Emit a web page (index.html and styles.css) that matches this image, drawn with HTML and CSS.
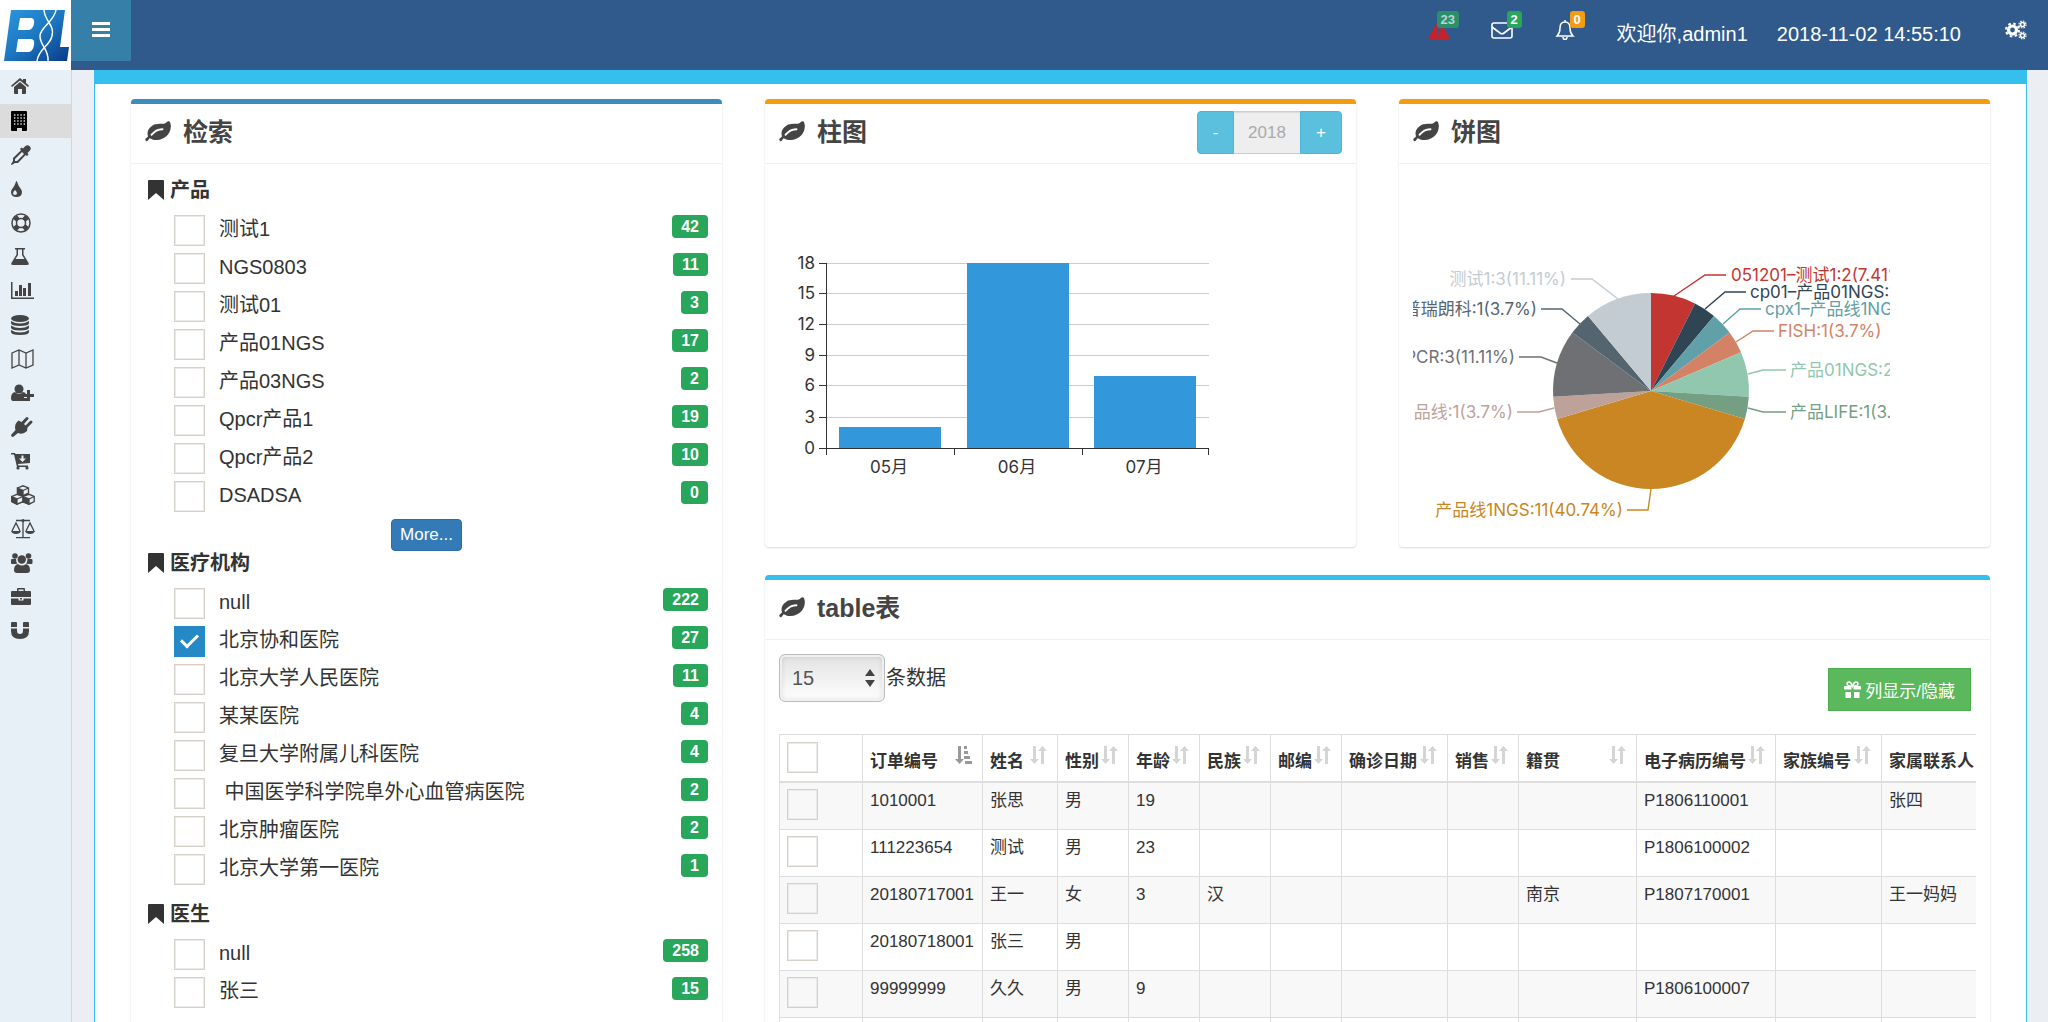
FILE: index.html
```html
<!DOCTYPE html>
<html lang="zh-CN">
<head>
    <meta charset="UTF-8">
    <meta name="viewport" content="width=device-width, initial-scale=1.0">
    <title>检索</title>
    <link rel="stylesheet" href="styles.css">
</head>
<body>
    <!-- shared icons -->
    <svg class="icon-defs" aria-hidden="true">
        <symbol id="i-leaf" viewBox="0 0 1802 1536">
            <path d="M1280 576q0-26-19-45t-45-19q-172 0-318 49.500t-259.500 134-235.500 219.500q-19 21-19 45 0 26 19 45t45 19q24 0 45-19 27-24 74-71t67-66q137-124 268.500-176t313.500-52q26 0 45-19t19-45zm512-198q0 95-20 193-46 224-184.500 383t-357.500 268q-214 108-438 108-148 0-286-47-15-5-88-42t-96-37q-16 0-39.500 32t-45 70-52.500 70-60 32q-43 0-63.500-17.500T26 1346q-2-4-6-11t-5.500-10-3-9.500T10 1302q0-35 31-73.500t68-65.500 68-56 31-48q0-4-14-38t-16-44q-9-51-9-104 0-115 43.500-220t119-184.500 170.500-139 204-95.500q55-18 145-25.500t179.500-9 178.500-6 163.500-24T1485 107l29.500-29.500 29.500-28 27-20 36.500-16T1651 9q39 0 70.500 46t47.500 112 24 124 8 96z"/>
        </symbol>
        <symbol id="i-bookmark" viewBox="0 0 16 20">
            <path d="M1 0h14q1 0 1 1v19l-8-7-8 7V1q0-1 1-1z"/>
        </symbol>
        <symbol id="i-sort" viewBox="0 0 17 18">
            <path d="M3 0h3v13h3l-4.500 5L0 13h3zM11 18h3V5h3l-4.500-5L8 5h3z"/>
        </symbol>
        <symbol id="i-sort-asc" viewBox="0 0 17 18">
            <path d="M3 0h3v13h3l-4.500 5L0 13h3zM9 0h3v3H9zM9 5h4v3H9zM9 10h6v3H9zM10 15h7v3h-7z"/>
        </symbol>
    </svg>

    <header class="header">
        <a class="logo" href="#" aria-label="BXL">
            <svg viewBox="0 0 71 70" width="71" height="70">
                <defs>
                    <linearGradient id="logoFill" x1="0" y1="0" x2="1" y2="1">
                        <stop offset="0" stop-color="#2a97df"/>
                        <stop offset="0.500" stop-color="#1c76c0"/>
                        <stop offset="1" stop-color="#0a3a86"/>
                    </linearGradient>
                </defs>
                <path fill="url(#logoFill)" fill-rule="evenodd" d="M11 10H65L60 47H69L67 61H4ZM20 18L18 30H29Q33 29 34 24Q35 18 31 18ZM18 39L16 52H29Q33 51 34 45Q35 39 31 39Z"/>
                <g fill="none" stroke="#fff" stroke-width="1.500">
                    <path d="M44 10C45 22 55 25 52 36C50 46 39 48 37 61"/>
                    <path d="M56 10C54 22 40 27 40 36C40 46 49 49 48 61"/>
                </g>
            </svg>
        </a>
        <button class="menu-toggle" type="button" aria-label="菜单">
            <svg viewBox="0 0 18 15" width="18" height="15"><path fill="#fff" d="M0 0h18v3H0zM0 6h18v3H0zM0 12h18v3H0z"/></svg>
        </button>
        <nav class="top-nav">
            <a class="notice" href="#">
                <svg class="alert" viewBox="0 0 22 20" width="22" height="20"><path d="M11 1q1 0 1.500 1l9 16q0 1-1 1h-19q-1 0-1-1l9-16q.5-1 1.500-1zM9.500 7l.5 6h2l.5-6zM10 14.500v2h2v-2z" fill-rule="evenodd"/></svg>
                <span class="count count-faded">23</span>
            </a>
            <a class="notice" href="#">
                <svg viewBox="0 0 22 20" width="22" height="20" fill="none" stroke="#fff" stroke-width="1.600"><rect x="1" y="3" width="20" height="15" rx="2"/><path d="M1 7l8 6q2 1.500 4 0l8-6"/></svg>
                <span class="count">2</span>
            </a>
            <a class="notice" href="#">
                <svg viewBox="0 0 22 20" width="22" height="20" fill="none" stroke="#fff" stroke-width="1.500"><path d="M11 0v2M3 16q3-3 3-8 0-6 5-6t5 6q0 5 3 8zM9 17q0 2.500 2 2.500T13 17"/></svg>
                <span class="count count-orange">0</span>
            </a>
            <span class="welcome">欢迎你,admin1</span>
            <time class="clock">2018-11-02 14:55:10</time>
            <a class="settings" href="#" aria-label="设置">
                <svg viewBox="0 0 22 20" width="22" height="20" fill="none" stroke="#fff">
                    <circle cx="7.500" cy="10" r="4" stroke-width="3.200"/>
                    <circle cx="7.500" cy="10" r="6.500" stroke-width="2" stroke-dasharray="2.600 2.500"/>
                    <circle cx="17.500" cy="4.500" r="2" stroke-width="1.600"/>
                    <circle cx="17.500" cy="4.500" r="3.500" stroke-width="1.200" stroke-dasharray="1.600 1.150"/>
                    <circle cx="17.500" cy="15.500" r="2" stroke-width="1.600"/>
                    <circle cx="17.500" cy="15.500" r="3.500" stroke-width="1.200" stroke-dasharray="1.600 1.150"/>
                </svg>
            </a>
        </nav>
    </header>

    <div class="wrapper">
        <aside class="sidebar">
            <a href="#" aria-label="首页"><svg viewBox="0 0 24 20"><path d="M9 5l6 5v6q0 1-1 1h-3v-5H7v5H4q-1 0-1-1v-6zM9 1l3 2.500V2h3v4l3 2.700-1 1.300-8-6.500L1 10 0 8.700z"/></svg></a>
            <a href="#" class="active" aria-label="楼宇"><svg viewBox="0 0 24 20"><path d="M1 0h14q1 0 1 1v18q0 1-1 1h-4v-3H6v3H1q-1 0-1-1V1q0-1 1-1z"/><path d="M3 4h11M3 7h11M3 10h11M3 13h11" stroke="#ddd" stroke-width="1.300" stroke-dasharray="1.400 1.800"/></svg></a>
            <a href="#" aria-label="取样"><svg viewBox="0 0 24 20"><path fill-rule="evenodd" d="M18.700 1.300q-2.200-2.300-4.500 0L12 3.500l-1.500-1L9 4l1 1.300L2 13v3l-2 3.300.7.700L4 18h3l7.700-8L16 11l1.500-1.500-1-1.500 2.200-2.200q2.300-2.200 0-4.500zM11 7l2 2-7 7H4v-2z"/></svg></a>
            <a href="#" aria-label="血液"><svg viewBox="0 0 24 20"><path fill-rule="evenodd" d="M5.500 2Q6 2 6.500 4 7.500 7 9.500 9.500 11 11 11 13q0 5-5.500 5T0 13q0-2 1.500-3.500Q3.500 7 4.500 4 5 2 5.500 2zM4 11q-2 2-2 3.200Q2 16 4 16t2-1.800Q6 13 4 11z"/></svg></a>
            <a href="#" aria-label="支持"><svg viewBox="0 0 24 20" fill="none" stroke="#444"><circle cx="10" cy="10" r="9" stroke-width="1.500"/><circle cx="10" cy="10" r="4.500" stroke-width="1.500"/><path d="M4 4l3 3M16 4l-3 3M4 16l3-3M16 16l-3-3" stroke-width="5"/></svg></a>
            <a href="#" aria-label="实验"><svg viewBox="0 0 24 20"><path fill-rule="evenodd" d="M4 1h10v1.500h-1.500v5L17 15q2 3-1 3H2q-3 0-1-3l4.500-7.500v-5H4zM7 2.500V8l-2.500 4h9L11 8V2.500z"/></svg></a>
            <a href="#" aria-label="统计"><svg viewBox="0 0 24 20"><path d="M0 1h1.500v15.500H23V18H0zM4 10h3v5H4zM8 4h3v11H8zM12 7h3v8h-3zM17 2h3v13h-3z"/></svg></a>
            <a href="#" aria-label="数据库"><svg viewBox="0 0 24 20"><ellipse cx="9" cy="3.500" rx="9" ry="3.500"/><path d="M0 6q4 2.500 9 2.500T18 6v2q0 3-9 3T0 8zM0 10.500Q4 13 9 13t9-2.500v2q0 3-9 3t-9-3zM0 15q4 2.500 9 2.500t9-2.500v2q0 3-9 3t-9-3z"/></svg></a>
            <a href="#" aria-label="地图"><svg viewBox="0 0 24 20" fill="none" stroke="#444" stroke-width="1.300"><path d="M1 4l7-3 7 3 7-3v15l-7 3-7-3-7 3zM8 1v15M15 4v15"/></svg></a>
            <a href="#" aria-label="添加用户"><svg viewBox="0 0 24 20"><circle cx="8" cy="6" r="4.500"/><path d="M4 9q4 4 8 0 2 0 3 2h-2v4h3v3H2q-2 0-2-3 0-5 4-6zM16 7h3v4h4v3h-4v4h-3v-4h-3v-3h3z"/></svg></a>
            <a href="#" aria-label="接口"><svg viewBox="0 0 24 20"><path d="M6 5l1.500-1.500 3 1.500L15 .5q1-1 2 0t0 2L13 7l1.500 1.500L19 4q1-1 2 0t0 2l-4.500 4.500L16 14q-4 4-9 2l-5 4q-2 0-2-2l4.500-5Q3 8 6 5z"/></svg></a>
            <a href="#" aria-label="采购"><svg viewBox="0 0 24 20"><path fill-rule="evenodd" d="M0 2h4l.5 1H19v9l-12 1 .5 1.500H17v1.500H6L3 3.500H0zM10.500 4.500v3H8l3.500 3.500L15 7.500h-2.500v-3z"/><circle cx="7" cy="17" r="1.600"/><circle cx="16" cy="17" r="1.600"/></svg></a>
            <a href="#" aria-label="库存"><svg viewBox="0 0 24 20" fill="#e7f0f6" stroke="#444" stroke-width="1.300"><path d="M6.500 3L12 .8 17.500 3v5L12 10.500 6.500 8zM.8 11.500L6 9.300l6 2.200v5.200L6 19.200.8 16.700zM12 11.500l6-2.200 5.200 2.200v5.200L18 19.200l-6-2.500z"/><path fill="#444" d="M6.500 3L12 5.500v5L6.500 8zM.8 11.500L6 14v5.200L.8 16.700zM12 11.500l6 2.500v5.200l-6-2.500z"/><path d="M12 5.500L17.500 3M6 14l6-2.500M18 14l5.200-2.500"/></svg></a>
            <a href="#" aria-label="比对"><svg viewBox="0 0 24 20"><path d="M5 1.500h14M12 1v17M5 18.700h14M1 12l4-8 4 8M15 12l4-8 4 8" fill="none" stroke="#444" stroke-width="1.300"/><circle cx="12" cy="1.500" r="1.500"/><path d="M0 12h10q-1 3-5 3t-5-3zM14 12h10q-1 3-5 3t-5-3z"/></svg></a>
            <a href="#" aria-label="团队"><svg viewBox="0 0 24 20"><circle cx="4" cy="3" r="2.800"/><circle cx="17.500" cy="3" r="2.800"/><circle cx="10.800" cy="6.500" r="4.200"/><path d="M0 7q0-1 1-1h4q0 3 1.500 4.500L4 11H1q-1 0-1-1zM21.500 7q0-1-1-1h-4q0 3-1.500 4.500l2.500.5h3q1 0 1-1zM7 11q4 3 8 0 4 1 4 6 0 3-3 3H6q-3 0-3-3 0-5 4-6z"/></svg></a>
            <a href="#" aria-label="业务"><svg viewBox="0 0 24 20"><path fill-rule="evenodd" d="M6 4V2q0-1 1-1h6q1 0 1 1v2h5q1 0 1 1v5H0V5q0-1 1-1zM7.500 2.500V4h5V2.500zM0 11.500h7.500v2h5v-2H20V17q0 1-1 1H1q-1 0-1-1z"/><path d="M9 11h2v1.500H9z"/></svg></a>
            <a href="#" aria-label="磁珠"><svg viewBox="0 0 24 20"><path d="M0 2q0-1 1-1h4q1 0 1 1v4H0zM12 2q0-1 1-1h4q1 0 1 1v4h-6zM0 7.500h6V10q0 3 3 3t3-3V7.500h6V10q0 8-9 8t-9-8z"/></svg></a>
        </aside>

        <main class="content">
            <section class="panel panel-search">
                <h2 class="panel-title"><svg class="leaf"><use href="#i-leaf"/></svg>检索</h2>
                <div class="panel-body">
                    <div class="facet has-more">
                        <h3><svg class="bookmark"><use href="#i-bookmark"/></svg>产品</h3>
                        <label><input type="checkbox"><span class="name">测试1</span><span class="badge">42</span></label>
                        <label><input type="checkbox"><span class="name">NGS0803</span><span class="badge">11</span></label>
                        <label><input type="checkbox"><span class="name">测试01</span><span class="badge">3</span></label>
                        <label><input type="checkbox"><span class="name">产品01NGS</span><span class="badge">17</span></label>
                        <label><input type="checkbox"><span class="name">产品03NGS</span><span class="badge">2</span></label>
                        <label><input type="checkbox"><span class="name">Qpcr产品1</span><span class="badge">19</span></label>
                        <label><input type="checkbox"><span class="name">Qpcr产品2</span><span class="badge">10</span></label>
                        <label><input type="checkbox"><span class="name">DSADSA</span><span class="badge">0</span></label>
                        <button class="btn-more" type="button">More...</button>
                    </div>
                    <div class="facet">
                        <h3><svg class="bookmark"><use href="#i-bookmark"/></svg>医疗机构</h3>
                        <label><input type="checkbox"><span class="name">null</span><span class="badge">222</span></label>
                        <label><input type="checkbox" checked><span class="name">北京协和医院</span><span class="badge">27</span></label>
                        <label><input type="checkbox"><span class="name">北京大学人民医院</span><span class="badge">11</span></label>
                        <label><input type="checkbox"><span class="name">某某医院</span><span class="badge">4</span></label>
                        <label><input type="checkbox"><span class="name">复旦大学附属儿科医院</span><span class="badge">4</span></label>
                        <label><input type="checkbox"><span class="name">&nbsp;中国医学科学院阜外心血管病医院</span><span class="badge">2</span></label>
                        <label><input type="checkbox"><span class="name">北京肿瘤医院</span><span class="badge">2</span></label>
                        <label><input type="checkbox"><span class="name">北京大学第一医院</span><span class="badge">1</span></label>
                    </div>
                    <div class="facet">
                        <h3><svg class="bookmark"><use href="#i-bookmark"/></svg>医生</h3>
                        <label><input type="checkbox"><span class="name">null</span><span class="badge">258</span></label>
                        <label><input type="checkbox"><span class="name">张三</span><span class="badge">15</span></label>
                    </div>
                </div>
            </section>

            <section class="panel panel-chart">
                <div class="panel-head">
                    <h2 class="panel-title"><svg class="leaf"><use href="#i-leaf"/></svg>柱图</h2>
                    <div class="year-picker">
                        <button type="button">-</button>
                        <input type="text" value="2018" aria-label="年份" disabled>
                        <button type="button">+</button>
                    </div>
                </div>
                <div class="panel-body">
                    <svg class="chart" viewBox="0 0 477 354">
                        <path class="grid-line" d="M48 85.500H430M48 115.500H430M48 146.500H430M48 177.500H430M48 207.500H430M48 239.500H430"/>
                        <g fill="#3398db">
                            <rect x="60" y="249" width="102" height="21"/>
                            <rect x="188" y="85" width="102" height="185"/>
                            <rect x="315" y="198" width="102" height="72"/>
                        </g>
                        <path class="axis" d="M47.500 85V277M40 270.500H430M40 85.500h7M40 115.500h7M40 146.500h7M40 177.500h7M40 207.500h7M40 239.500h7M175.500 271v6M303.500 271v6M429.500 271v6"/>
                        <g class="axis-text" text-anchor="end">
                            <text x="36" y="91">18</text>
                            <text x="36" y="121">15</text>
                            <text x="36" y="152">12</text>
                            <text x="36" y="183">9</text>
                            <text x="36" y="213">6</text>
                            <text x="36" y="245">3</text>
                            <text x="36" y="276">0</text>
                        </g>
                        <g class="axis-text" text-anchor="middle">
                            <text x="110" y="295">05月</text>
                            <text x="238" y="295">06月</text>
                            <text x="365" y="295">07月</text>
                        </g>
                    </svg>
                </div>
            </section>

            <section class="panel panel-chart">
                <h2 class="panel-title"><svg class="leaf"><use href="#i-leaf"/></svg>饼图</h2>
                <div class="panel-body">
                    <svg class="chart" viewBox="0 0 477 354">
                        <path fill="#c23531" d="M238 213V115A98 98 0 0 1 282 125.400Z"/>
                        <path fill="#2f4554" d="M238 213L282 125.400A98 98 0 0 1 301 137.900Z"/>
                        <path fill="#61a0a8" d="M238 213L301 137.900A98 98 0 0 1 316.600 154.500Z"/>
                        <path fill="#d48265" d="M238 213L316.600 154.500A98 98 0 0 1 328 174.200Z"/>
                        <path fill="#91c7ae" d="M238 213L328 174.200A98 98 0 0 1 335.800 218.700Z"/>
                        <path fill="#749f83" d="M238 213L335.800 218.700A98 98 0 0 1 331.900 241.100Z"/>
                        <path fill="#ca8622" d="M238 213L331.900 241.100A98 98 0 0 1 144.100 241.100Z"/>
                        <path fill="#bda29a" d="M238 213L144.100 241.100A98 98 0 0 1 140.200 218.700Z"/>
                        <path fill="#6e7074" d="M238 213L140.200 218.700A98 98 0 0 1 159.400 154.500Z"/>
                        <path fill="#546570" d="M238 213L159.400 154.500A98 98 0 0 1 175 137.900Z"/>
                        <path fill="#c4ccd3" d="M238 213L175 137.900A98 98 0 0 1 238 115Z"/>
                        <g class="leader">
                            <path stroke="#c23531" d="M261 118L292 97H313"/>
                            <path stroke="#2f4554" d="M292 131L312 114H333"/>
                            <path stroke="#61a0a8" d="M310 146L327 131H348"/>
                            <path stroke="#d48265" d="M323 164L340 153H361"/>
                            <path stroke="#91c7ae" d="M335 196L350 192H373"/>
                            <path stroke="#749f83" d="M335 230L350 234H373"/>
                            <path stroke="#ca8622" d="M238 311L235 332H214"/>
                            <path stroke="#bda29a" d="M141 230L126 234H104"/>
                            <path stroke="#6e7074" d="M144 185L128 179H106"/>
                            <path stroke="#546570" d="M167 146L149 131H128"/>
                            <path stroke="#c4ccd3" d="M205 121L179 101H158"/>
                        </g>
                        <g class="pie-text">
                            <text x="318" y="103" fill="#c23531">051201–测试1:2(7.41%)</text>
                            <text x="337" y="120" fill="#2f4554">cp01–产品01NGS:1(3.7%)</text>
                            <text x="352" y="137" fill="#61a0a8">cpx1–产品线1NGS:1(3.7%)</text>
                            <text x="365" y="159" fill="#d48265">FISH:1(3.7%)</text>
                            <text x="377" y="198" fill="#91c7ae">产品01NGS:2(7.41%)</text>
                            <text x="377" y="240" fill="#749f83">产品LIFE:1(3.7%)</text>
                        </g>
                        <g class="pie-text" text-anchor="end">
                            <text x="210" y="338" fill="#ca8622">产品线1NGS:11(40.74%)</text>
                            <text x="100" y="240" fill="#bda29a">产品线:1(3.7%)</text>
                            <text x="102" y="185" fill="#6e7074">QPCR:3(11.11%)</text>
                            <text x="124" y="137" fill="#546570">普瑞朗科:1(3.7%)</text>
                            <text x="153" y="107" fill="#c4ccd3">测试1:3(11.11%)</text>
                        </g>
                    </svg>
                </div>
            </section>

            <section class="panel panel-table">
                <h2 class="panel-title"><svg class="leaf"><use href="#i-leaf"/></svg>table表</h2>
                <div class="panel-body">
                    <div class="toolbar">
                        <label class="page-size">
                            <span class="select-box">
                                <select>
                                    <option>15</option>
                                    <option>30</option>
                                    <option>50</option>
                                </select>
                                <svg viewBox="0 0 10 18" width="10" height="18"><path fill="#444" d="M5 0l5 7H0zM5 18l5-7H0z"/></svg>
                            </span>条数据
                        </label>
                        <button class="btn-columns" type="button">
                            <svg viewBox="0 0 17 17" width="17" height="17"><path fill="#fff" d="M1 5h6.500v3.500H0V6q0-1 1-1zM9.500 5H16q1 0 1 1v2.500H9.500zM1.500 11h5.500v6H1.500zM10 11h5.500v6H10z"/><path d="M8 5Q3 5 3 3q0-2 2-2t3.500 4Q10 1 12 1t2 2q0 2-5 2" fill="none" stroke="#fff" stroke-width="1.500"/></svg>
                            列显示/隐藏
                        </button>
                    </div>
                    <div class="table-scroll">
                        <table>
                            <colgroup>
                                <col class="w-check"><col class="w-order"><col class="w-name"><col class="w-short"><col class="w-short"><col class="w-short"><col class="w-short"><col class="w-date"><col class="w-short"><col class="w-place"><col class="w-record"><col class="w-date"><col class="w-contact">
                            </colgroup>
                            <thead>
                                <tr>
                                    <th><input type="checkbox" aria-label="全选"></th>
                                    <th><span>订单编号<svg class="sorted"><use href="#i-sort-asc"/></svg></span></th>
                                    <th><span>姓名<svg><use href="#i-sort"/></svg></span></th>
                                    <th><span>性别<svg><use href="#i-sort"/></svg></span></th>
                                    <th><span>年龄<svg><use href="#i-sort"/></svg></span></th>
                                    <th><span>民族<svg><use href="#i-sort"/></svg></span></th>
                                    <th><span>邮编<svg><use href="#i-sort"/></svg></span></th>
                                    <th><span>确诊日期<svg><use href="#i-sort"/></svg></span></th>
                                    <th><span>销售<svg><use href="#i-sort"/></svg></span></th>
                                    <th><span>籍贯<svg><use href="#i-sort"/></svg></span></th>
                                    <th><span>电子病历编号<svg><use href="#i-sort"/></svg></span></th>
                                    <th><span>家族编号<svg><use href="#i-sort"/></svg></span></th>
                                    <th><span>家属联系人<svg><use href="#i-sort"/></svg></span></th>
                                </tr>
                            </thead>
                            <tbody>
                                <tr><td><input type="checkbox" aria-label="选择"></td><td>1010001</td><td>张思</td><td>男</td><td>19</td><td></td><td></td><td></td><td></td><td></td><td>P1806110001</td><td></td><td>张四</td></tr>
                                <tr><td><input type="checkbox" aria-label="选择"></td><td>111223654</td><td>测试</td><td>男</td><td>23</td><td></td><td></td><td></td><td></td><td></td><td>P1806100002</td><td></td><td></td></tr>
                                <tr><td><input type="checkbox" aria-label="选择"></td><td>20180717001</td><td>王一</td><td>女</td><td>3</td><td>汉</td><td></td><td></td><td></td><td>南京</td><td>P1807170001</td><td></td><td>王一妈妈</td></tr>
                                <tr><td><input type="checkbox" aria-label="选择"></td><td>20180718001</td><td>张三</td><td>男</td><td></td><td></td><td></td><td></td><td></td><td></td><td></td><td></td><td></td></tr>
                                <tr><td><input type="checkbox" aria-label="选择"></td><td>99999999</td><td>久久</td><td>男</td><td>9</td><td></td><td></td><td></td><td></td><td></td><td>P1806100007</td><td></td><td></td></tr>
                                <tr><td><input type="checkbox" aria-label="选择"></td><td></td><td></td><td></td><td></td><td></td><td></td><td></td><td></td><td></td><td></td><td></td><td></td></tr>
                            </tbody>
                        </table>
                    </div>
                </div>
            </section>
        </main>
    </div>
</body>
</html>
```

FILE: styles.css
```css
* {
    box-sizing: border-box;
}

body {
    margin: 0;
    height: 100vh;
    display: flex;
    flex-direction: column;
    overflow: hidden;
    background: #ebeff4;
    color: #333;
    font-family: "Liberation Sans", "Noto Sans CJK SC", sans-serif;
    font-size: 20px;
    line-height: 28px;
}

button, input, select {
    font-family: inherit;
    margin: 0;
}

a {
    color: inherit;
    text-decoration: none;
}

.icon-defs {
    display: none;
}

/* header */
.header {
    display: flex;
    align-items: flex-start;
    flex-shrink: 0;
    height: 70px;
    background: #30598c;
    color: white;
}

.logo {
    width: 71px;
    height: 70px;
    background: white;
}

.logo svg {
    display: block;
}

.menu-toggle {
    width: 60px;
    height: 61px;
    padding: 0;
    border: none;
    background: #367fa9;
    cursor: pointer;
}

.top-nav {
    display: flex;
    align-items: flex-start;
    margin-left: auto;
    padding: 20px 21px 0 0;
}

.notice {
    position: relative;
    display: flex;
    width: 22px;
    margin-right: 41px;
}

.alert {
    fill: #c9202b;
}

.count {
    position: absolute;
    left: 16px;
    top: -9px;
    padding: 0 4px;
    border-radius: 3px;
    background: #28a65a;
    font-size: 13px;
    font-weight: bold;
    line-height: 17px;
}

.count-faded {
    left: 9px;
    background: #29906a;
    color: #b9d4d2;
}

.count-orange {
    background: #f39c12;
}

.welcome {
    margin-right: 29px;
}

.clock {
    margin-right: 44px;
}

.settings {
    display: flex;
}

/* layout */
.wrapper {
    display: flex;
    flex: 1;
    min-height: 0;
}

.sidebar {
    flex-shrink: 0;
    width: 72px;
    background: #e7f0f6;
    border-right: 1px solid #cfd7e2;
}

.sidebar a {
    display: flex;
    align-items: center;
    height: 34px;
    padding-left: 11px;
}

.sidebar svg {
    width: 24px;
    height: 20px;
}

.sidebar svg:not([fill]) {
    fill: #444;
}

.sidebar .active {
    background: #dcdcdc;
}

.sidebar .active svg {
    fill: #000;
}

.content {
    flex: 1;
    min-width: 0;
    margin: 0 21px 0 22px;
    padding: 15px 36px 0;
    display: grid;
    grid-template-columns: repeat(3, minmax(0, 1fr));
    grid-template-rows: auto 1fr;
    gap: 28px 43px;
    border: 1px solid #35bfef;
    border-width: 14px 1px 0;
    background: white;
}

/* panels */
.panel {
    border-top: 5px solid #f39c12;
    border-radius: 4px;
    box-shadow: 0 1px 2px rgba(0,0,0,0.15);
    background: white;
}

.panel-search {
    grid-row: span 2;
    border-top-color: #3c8dbc;
}

.panel-table {
    grid-column: span 2;
    border-top-color: #35bfef;
}

.panel-title {
    display: flex;
    align-items: center;
    margin: 0;
    padding: 14px 14px 17px;
    border-bottom: 1px solid #f1f1f1;
    color: #444;
    font-size: 25px;
}

.panel-head {
    display: flex;
    justify-content: space-between;
    border-bottom: 1px solid #f1f1f1;
}

.panel-head .panel-title {
    border-bottom: none;
}

.leaf {
    width: 26px;
    height: 22px;
    margin-right: 12px;
    fill: #444;
}

.panel-body {
    padding: 14px 14px 15px;
}

/* search facets */
.facet {
    display: flex;
    flex-direction: column;
    padding-bottom: 10px;
}

.facet.has-more {
    padding-bottom: 0;
}

.facet h3 {
    display: flex;
    align-items: center;
    gap: 6px;
    margin: 0 0 13px 3px;
    font-size: 20px;
    line-height: 24px;
}

.bookmark {
    width: 16px;
    height: 20px;
    fill: #333;
}

.facet label {
    display: flex;
    align-items: flex-start;
    height: 38px;
    padding-left: 29px;
    cursor: pointer;
}

.facet .name {
    margin: 0 auto 0 14px;
}

.badge {
    padding: 0 9px;
    border-radius: 4px;
    background: #28a65a;
    color: white;
    font-size: 16px;
    font-weight: bold;
    line-height: 23px;
}

.btn-more {
    align-self: center;
    height: 32px;
    padding: 0 8px;
    border: 1px solid #2e6da4;
    border-radius: 4px;
    background: #337ab7;
    color: white;
    font-size: 17px;
    cursor: pointer;
}

input[type="checkbox"] {
    appearance: none;
    display: grid;
    place-items: center;
    flex-shrink: 0;
    width: 31px;
    height: 31px;
    border: 1px solid #d5d1ca;
    box-shadow: inset 0 0 0 1px #ecebe8;
    background: transparent;
    cursor: pointer;
}

input[type="checkbox"]:checked {
    border-color: #2489c5;
    box-shadow: none;
    background: #2489c5;
}

input[type="checkbox"]:checked::after {
    content: "";
    width: 14px;
    height: 7px;
    margin-bottom: 5px;
    border: solid white;
    border-width: 0 0 3px 3px;
    transform: rotate(-45deg);
}

/* charts */
.year-picker {
    display: flex;
    height: 43px;
    margin: 7px 14px 0 0;
}

.year-picker button {
    width: 37px;
    padding: 0;
    border: 1px solid #46b8da;
    border-radius: 4px 0 0 4px;
    background: #5bc0de;
    color: white;
    font-size: 17px;
    cursor: pointer;
}

.year-picker button:last-child {
    width: 42px;
    border-radius: 0 4px 4px 0;
}

.year-picker input {
    width: 66px;
    padding: 0;
    border: 1px solid #ccc;
    border-width: 1px 0;
    border-radius: 0;
    background: #eee;
    color: #aaa;
    font-size: 17px;
    text-align: center;
    box-shadow: inset 0 1px 1px rgba(0,0,0,0.08);
}

.chart {
    display: block;
    width: 477px;
    max-width: 100%;
    height: 354px;
    overflow: hidden;
    font-family: Inter, "Noto Sans CJK SC", sans-serif;
    font-size: 17px;
}

.grid-line {
    stroke: #ccc;
}

.axis {
    fill: none;
    stroke: #333;
}

.axis-text {
    fill: #333;
}

.leader {
    fill: none;
    stroke-width: 1.4;
}

/* table panel */
.toolbar {
    display: flex;
    justify-content: space-between;
    align-items: flex-start;
    margin-bottom: 23px;
}

.page-size {
    display: flex;
    align-items: center;
}

.select-box {
    position: relative;
    display: flex;
    align-items: center;
    margin-right: 1px;
}

.select-box select {
    appearance: none;
    width: 106px;
    height: 48px;
    padding: 0 12px;
    border: 1px solid #bbb;
    border-radius: 6px;
    background: linear-gradient(#e2e2e2, #fff);
    box-shadow: inset 0 0 0 2px #f0f0f0, inset 0 0 6px rgba(0,0,0,0.2);
    color: #555;
    font-size: 20px;
}

.select-box svg {
    position: absolute;
    right: 10px;
    pointer-events: none;
}

.btn-columns {
    display: flex;
    align-items: center;
    gap: 4px;
    height: 43px;
    margin: 14px 5px 0 0;
    padding: 0 15px;
    border: 1px solid #4cae4c;
    background: #5cb85c;
    color: white;
    font-size: 17px;
    cursor: pointer;
}

.table-scroll {
    overflow: hidden;
}

table {
    width: 1254px;
    table-layout: fixed;
    border-collapse: collapse;
    font-size: 17px;
    line-height: 24px;
}

.w-check { width: 83px; }
.w-order { width: 120px; }
.w-name { width: 75px; }
.w-short { width: 71px; }
.w-date { width: 106px; }
.w-place { width: 118px; }
.w-record { width: 139px; }
.w-contact { width: 152px; }

th, td {
    height: 47px;
    padding: 6px 7px;
    border: 1px solid #ddd;
    text-align: left;
    vertical-align: top;
}

th {
    padding: 7px;
    border-bottom-width: 2px;
    white-space: nowrap;
}

th span {
    display: flex;
    justify-content: space-between;
    padding-top: 8px;
}

th svg {
    flex-shrink: 0;
    width: 17px;
    height: 18px;
    margin: -4px 3px 0 0;
    fill: #d5d5d5;
}

th .sorted {
    fill: #999;
}

tbody tr:nth-child(odd) {
    background: #f8f8f8;
}
```
